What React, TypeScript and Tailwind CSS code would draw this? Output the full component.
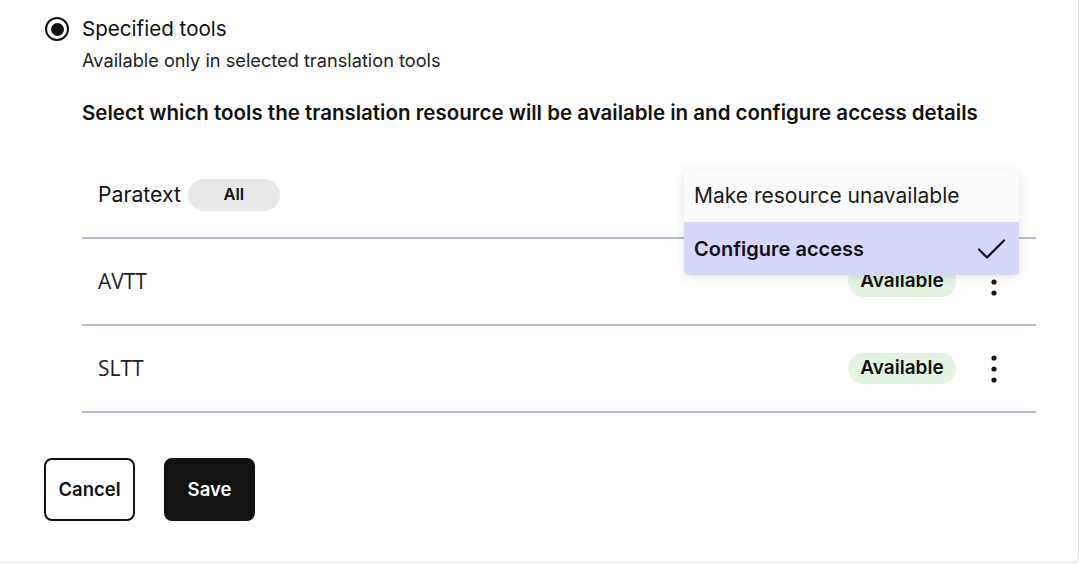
import React from "react";

const rows = [
  { name: "AVTT", status: "Available" },
  { name: "SLTT", status: "Available" },
];

const Kebab = () => (
  <svg width="8" height="28" viewBox="0 0 8 28" className="text-[#1a1a1a]">
    <circle cx="4" cy="3" r="2.6" fill="currentColor" />
    <circle cx="4" cy="14" r="2.6" fill="currentColor" />
    <circle cx="4" cy="25" r="2.6" fill="currentColor" />
  </svg>
);

const Check = () => (
  <svg width="30" height="22" viewBox="0 0 30 22" fill="none">
    <path d="M2 11.5 L10 19.5 L27 2.5" stroke="#111" strokeWidth="2.2" strokeLinecap="round" strokeLinejoin="round" />
  </svg>
);

export default function App() {
  return (
    <div className="w-[1079px] h-[563px] bg-white border-r border-b border-[#e3e5ea] rounded-br-[6px] font-['Inter',sans-serif] text-[#111]">
      <div className="pl-[45px] pt-[16px]">
        <div className="flex items-center h-[26px]">
          <span className="w-[24px] h-[24px] rounded-full border-2 border-[#111] flex items-center justify-center">
            <span className="w-[13px] h-[13px] rounded-full bg-[#111]" />
          </span>
          <span className="ml-[13px] text-[20.6px] leading-none">Specified tools</span>
        </div>
        <div className="pl-[37px]">
          <p className="mt-[9px] text-[18.2px] leading-[18px] text-[#222]">Available only in selected translation tools</p>
          <h2 className="mt-[34px] text-[20.5px] font-semibold leading-[20px]">
            Select which tools the translation resource will be available in and configure access details
          </h2>

          <div className="mt-[29px] w-[954px]">
            <div className="relative h-[87px] border-b-2 border-[#b5bccd] flex items-center pl-[16px]">
              <span className="text-[21.2px]">Paratext</span>
              <span className="ml-[7px] w-[92px] h-[32px] rounded-full bg-[#e8e8e8] flex items-center justify-center text-[16.5px] font-semibold">
                All
              </span>
              <div className="absolute left-[602px] top-[17px] w-[335px] rounded-[5px] overflow-hidden bg-[#fbfbfb] shadow-[0_2px_10px_rgba(0,0,0,0.12)] z-10">
                <div className="h-[53px] flex items-center px-[10px] text-[21px] text-[#1a1a1a]">Make resource unavailable</div>
                <div className="h-[53px] flex items-center justify-between pl-[10px] pr-[12px] bg-[#d5d7fb] text-[20px] font-semibold">
                  <span>Configure access</span>
                  <Check />
                </div>
              </div>
            </div>
            {rows.map((r) => (
              <div key={r.name} className="h-[87px] border-b-2 border-[#b5bccd] flex items-center pl-[16px] pr-[38px]">
                <span className="text-[21px] font-['Open_Sans',sans-serif] text-[#222]">{r.name}</span>
                <span className="ml-auto w-[108px] h-[31px] rounded-full bg-[#e2f5e3] flex items-center justify-center text-[19px] font-semibold">
                  {r.status}
                </span>
                <span className="ml-[34px] flex items-center">
                  <Kebab />
                </span>
              </div>
            ))}
          </div>
        </div>

        <div className="mt-[45px] flex gap-[29px] -ml-[1px]">
          <button className="w-[91px] h-[63px] rounded-[8px] border-2 border-[#111] bg-white text-[18.5px] font-semibold">Cancel</button>
          <button className="w-[91px] h-[63px] rounded-[8px] border-2 border-[#111] bg-[#111] text-white text-[18.5px] font-semibold">Save</button>
        </div>
      </div>
    </div>
  );
}
